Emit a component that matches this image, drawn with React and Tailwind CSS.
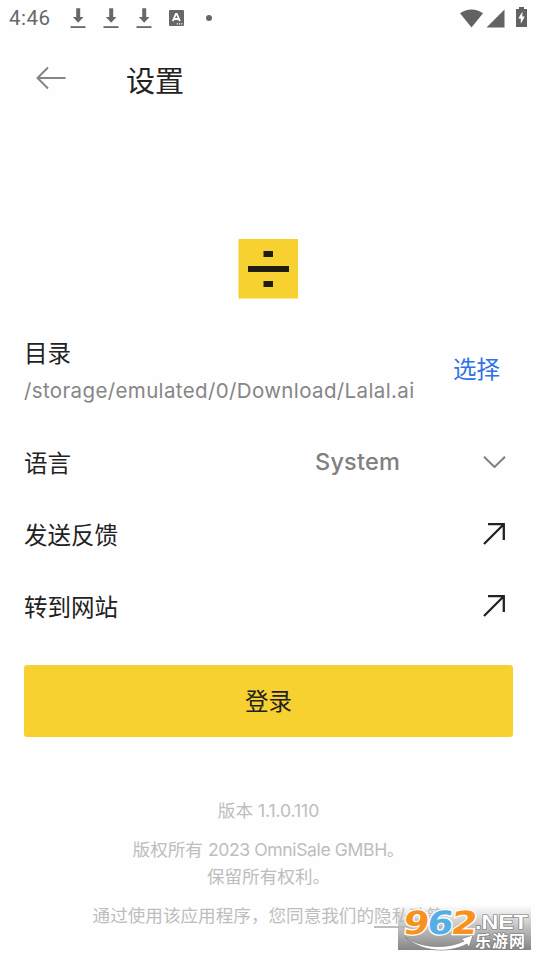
import React from 'react';

const DownloadIcon = () => (
  <svg className="h-[22px] w-4 shrink-0" viewBox="0 0 16 22" fill="#686868">
    <path d="M6.2 1.3h4v8.6h3.3L8.2 15.8 2.9 9.9h3.3z" />
    <rect x="0.5" y="19.2" width="15" height="1.8" />
  </svg>
);

const StatusBar = () => (
  <div className="flex h-9 items-center pl-[9px] pr-[9px] text-[#686868]">
    <span className="w-[61px] font-[Roboto] text-[20.5px] leading-6 tracking-[0.5px]">4:46</span>
    <div className="flex gap-[17px]">
      <DownloadIcon />
      <DownloadIcon />
      <DownloadIcon />
    </div>
    <svg className="ml-[17px] h-4 w-[15px]" viewBox="0 0 15 16">
      <rect width="15" height="16" rx="1" fill="#686868" />
      <path d="M3.8 11.2 6.9 3.8h.9l3.1 7.4M5 9h4.7" fill="none" stroke="#fff" strokeWidth="1.8" />
      <path d="M7.8 13.2h1.2v1.2H7.8zM10 13.2h1.2v1.2H10zM12.2 13.2h1.2v1.2h-1.2z" fill="#fff" />
    </svg>
    <span className="ml-[22px] size-[6px] rounded-full bg-[#686868]" />
    <div className="ml-auto flex items-center pr-px">
      <svg className="h-[19px] w-[23px]" viewBox="0 0 23 19" fill="#626262">
        <path d="M0 4.2C6.5-.9 16.5-.9 23 4.2L11.5 18.4z" />
      </svg>
      <svg className="ml-[3px] h-[19px] w-[19px]" viewBox="0 0 19 19" fill="#626262">
        <path d="M18.5.5v18H.5z" />
      </svg>
      <svg className="mb-[2px] ml-[11px] h-5 w-[11px]" viewBox="0 0 11 20">
        <path d="M3 0h5v2h3v18H0V2h3z" fill="#626262" />
        <path d="M6.5 4.5 2.3 11.5h2.5v5.3l4-7.3H6.3z" fill="#fff" />
      </svg>
    </div>
  </div>
);

const Logo = () => (
  <svg className="ml-[238px] mt-[136px] size-[60px]" viewBox="0 0 60 60">
    <rect x="0.5" width="59.5" height="59.5" fill="#f7d12f" />
    <g fill="#1f1c14">
      <rect x="25.5" y="12" width="9.5" height="6" />
      <rect x="10" y="27" width="41" height="6" />
      <rect x="25.5" y="42" width="9.5" height="6" />
    </g>
  </svg>
);

const ExternalIcon = () => (
  <svg className="mb-1 mr-[8px] size-[22px]" viewBox="0 0 22 22" fill="none" stroke="#222" strokeWidth="2.3">
    <path d="M1 21 20.5 1.5M5 1.2h15.8V17" />
  </svg>
);

const LinkRow = ({ label }) => (
  <a className="flex h-[72px] items-center justify-between">
    <span>{label}</span>
    <ExternalIcon />
  </a>
);

const Watermark = () => (
  <div className="absolute left-[398px] top-[906px] h-[44px] w-[133px] bg-linear-to-b from-[#e8e8e8]/10 via-[#b4b4b4]/85 via-50% to-[#868686]">
    <svg className="h-[44px] w-[133px] overflow-visible" viewBox="0 0 133 44">
      <path d="M7 31C24 43 50 43 66 35l-3-2 12-4-4 12-2-3C50 48 24 46 7 31z" fill="#fff" stroke="#777" strokeWidth="0.6" />
      <g
        transform="translate(4 0) skewX(-8)"
        fontFamily="DejaVu Sans"
        fontWeight="700"
        fontSize="32"
        stroke="#fff"
        strokeWidth="2.5"
        paintOrder="stroke"
      >
        <text x="4" y="28" textLength="26" lengthAdjust="spacingAndGlyphs" fill="#f7921e">9</text>
        <text x="28" y="28" textLength="26" lengthAdjust="spacingAndGlyphs" fill="#55aee3">6</text>
        <text x="52" y="28" textLength="26" lengthAdjust="spacingAndGlyphs" fill="#f7921e">2</text>
      </g>
      <g fill="#fff" stroke="#777" strokeWidth="1.2" paintOrder="stroke" fontWeight="700">
        <text x="77" y="22.5" fontFamily="Liberation Sans" fontSize="20" textLength="53" lengthAdjust="spacingAndGlyphs">.NET</text>
        <text x="77" y="40.5" fontFamily="Noto Sans CJK SC" fontSize="16" textLength="50">乐游网</text>
      </g>
    </svg>
  </div>
);

export default function App() {
  return (
    <div className="relative h-[956px] w-[537px] overflow-hidden bg-[#fefefe] font-['Inter','Noto_Sans_CJK_SC',sans-serif] text-[#222]">
      <StatusBar />

      <header className="flex h-[67px] items-center pl-9 pt-[19px]">
        <svg className="mb-[3px] h-6 w-[30px]" viewBox="0 0 30 24" fill="none" stroke="#858585" strokeWidth="2">
          <path d="M29.5 12H1.5M12 1.5 1.5 12 12 22.5" />
        </svg>
        <h1 className="ml-[60px] font-['Noto_Sans_CJK_SC',sans-serif] text-[29px] leading-10">设置</h1>
      </header>

      <Logo />

      <main className="px-6 text-[23.5px] leading-8">
        <section className="mt-[37px] flex h-[72px] items-center justify-between">
          <div>
            <div className="pt-px">目录</div>
            <div className="mt-[5px] whitespace-nowrap text-[20.5px] leading-8 tracking-[0.37px] text-[#868686]">
              /storage/emulated/0/Download/Lalal.ai
            </div>
          </div>
          <button className="mb-[5px] mr-[13px] text-[#2f70e9]">选择</button>
        </section>

        <section className="mt-5 flex h-[72px] items-center">
          <span className="w-[291px]">语言</span>
          <span className="mb-[4px] font-medium tracking-[0.2px] text-[#808080]">System</span>
          <svg className="mb-[4px] ml-auto mr-[7px] h-3 w-[23px]" viewBox="0 0 23 12" fill="none" stroke="#808080" strokeWidth="2">
            <path d="m1 .8 10.5 10.2L22 .8" />
          </svg>
        </section>
        <LinkRow label="发送反馈" />
        <LinkRow label="转到网站" />

        <button className="mt-[21px] h-[72px] w-full rounded-[3px] bg-[#f7d12f] pt-[2px]">登录</button>
      </main>

      <footer className="mt-[60px] whitespace-nowrap text-center text-[17.6px] leading-[27px] text-[#bdbdbd]">
        <p>
          版本 <span className="tracking-[-0.1px]">1.1.0.110</span>
        </p>
        <p className="mt-3">
          版权所有 <span className="tracking-[-0.4px]">2023 OmniSale GMBH</span>。
          <br />
          保留所有权利。
        </p>
        <p className="mt-3">
          通过使用该应用程序，您同意我们的
          <span className="border-b-2 border-[#bdbdbd]">隐私政策</span>
        </p>
      </footer>

      <Watermark />
    </div>
  );
}
